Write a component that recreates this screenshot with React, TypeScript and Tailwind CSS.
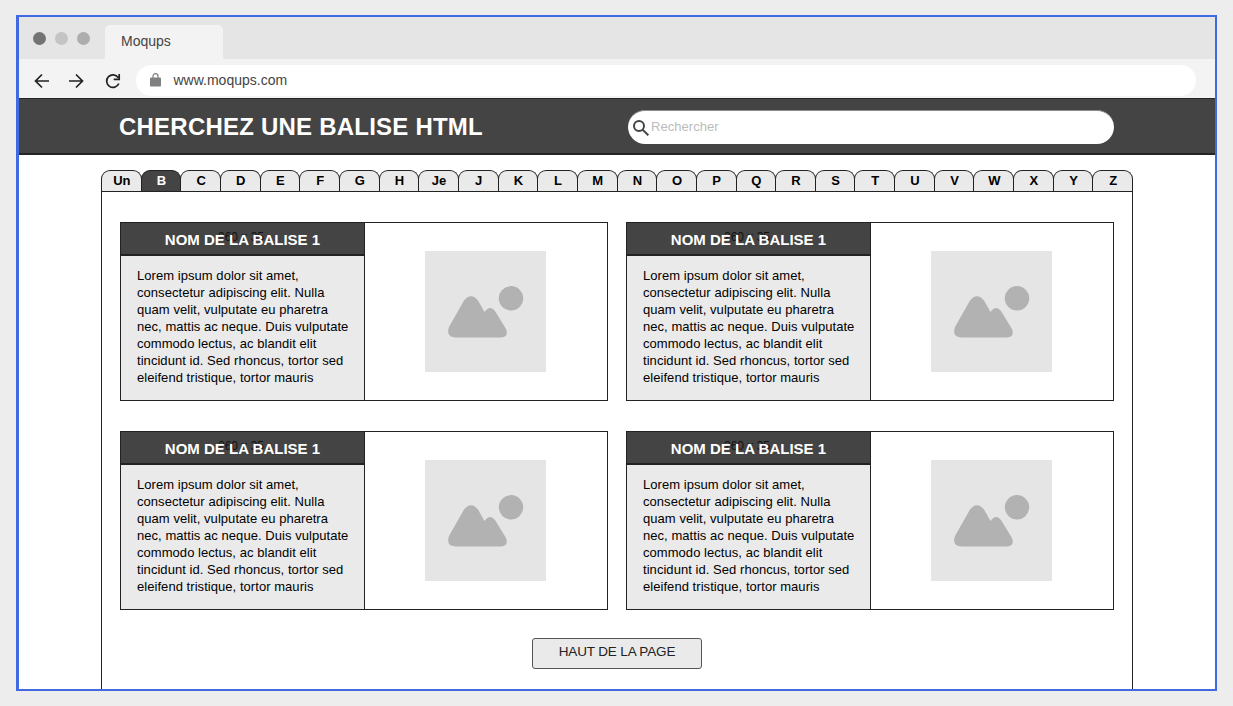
const letters = ['Un', 'B', 'C', 'D', 'E', 'F', 'G', 'H', 'Je', 'J', 'K', 'L', 'M', 'N', 'O', 'P', 'Q', 'R', 'S', 'T', 'U', 'V', 'W', 'X', 'Y', 'Z'];

const lines = [
  'Lorem ipsum dolor sit amet,',
  'consectetur adipiscing elit. Nulla',
  'quam velit, vulputate eu pharetra',
  'nec, mattis ac neque. Duis vulputate',
  'commodo lectus, ac blandit elit',
  'tincidunt id. Sed rhoncus, tortor sed',
  'eleifend tristique, tortor mauris',
];

function Picture() {
  return (
    <svg className="block h-[121px] w-[121px] bg-[#e5e5e5]" viewBox="0 0 121 121" fill="#b2b2b2">
      <circle cx="86" cy="47.300" r="12.200" />
      <path d="M39 49.500Q46 41 53 49.500L59.500 61Q65 53.500 70 60L81 78Q84 86.500 75 86.500H31Q20.500 86 24 76Z" />
    </svg>
  );
}

function Card() {
  return (
    <article className="flex h-[179px] w-[488px] border border-[#222] bg-white">
      <div className="flex w-[244px] flex-col border-r border-[#222] bg-[#eaeaea]">
        <h2 className="relative h-[33px] border-b-2 border-[#222] bg-[#444] text-center text-[15px] leading-[33px] font-bold text-white">
          <span className="absolute top-[-2px] right-0 left-[-3px] text-[12px] font-normal text-[#111]">260 x 35</span>
          <span className="relative whitespace-nowrap">NOM DE LA BALISE 1</span>
        </h2>
        <p className="pt-[11px] pl-4 text-[13px] leading-[17px] tracking-[0.05px] text-black">
          {lines.map((line) => (
            <span key={line} className="block whitespace-nowrap">{line}</span>
          ))}
        </p>
      </div>
      <div className="flex-1 pt-7 pl-[60px]">
        <Picture />
      </div>
    </article>
  );
}

function Browser() {
  return (
    <header>
      <div className="flex h-[42px] bg-[#e5e5e5] pl-[14px]">
        <div className="flex gap-[9px] pt-[15px]">
          <i className="size-[13px] rounded-full bg-[#737373]" />
          <i className="size-[13px] rounded-full bg-[#c4c4c4]" />
          <i className="size-[13px] rounded-full bg-[#adadad]" />
        </div>
        <div className="mt-2 ml-[15px] w-[118px] rounded-t-[5px] bg-[#f3f3f3] pl-4 text-[14px] leading-[32px] text-[#444]">Moqups</div>
      </div>
      <div className="flex h-[39px] items-start bg-[#f3f3f3] pt-[6px] pl-[15px]">
        <svg className="mt-[8px] h-4 w-[87px]" viewBox="0 0 87 16" fill="none" stroke="#222" strokeWidth="1.7">
          <path d="M15 8H1.500M8 1.500 1.500 8 8 14.500M35 8h13.500M42 1.500 48.500 8 42 14.500" />
          <path d="M84.200 4.600A6.300 6.300 0 1 0 84.800 10.500M85.200 1v5.300H79.700" />
        </svg>
        <div className="ml-[15px] flex h-[31px] w-[1060px] items-center rounded-full bg-white pl-[14px] text-[14px] text-[#444]">
          <svg className="-mt-px h-[14px] w-[11px]" viewBox="0 0 11 14">
            <path d="M3 6V3.200a2.500 2.500 0 0 1 5 0V6" fill="none" stroke="#808080" strokeWidth="1.200" />
            <rect y="4.500" width="11" height="9" rx="1" fill="#808080" />
          </svg>
          <span className="ml-[12.500px]">www.moqups.com</span>
        </div>
      </div>
    </header>
  );
}

export default function App() {
  return (
    <div className="h-[706px] w-[1233px] overflow-hidden bg-[#ededed] pt-[15px] pl-4 font-['Liberation_Sans',Arial,sans-serif]">
      <main className="flex h-[676px] w-[1201px] flex-col overflow-hidden border-2 border-l-3 border-[#4169e1] bg-white">
        <Browser />
        <section className="flex h-[57px] shrink-0 border-t border-b-2 border-[#252525] bg-[#444] pl-[100px]">
          <h1 className="w-[509px] text-[24px] leading-[56px] font-bold tracking-[0.22px] whitespace-nowrap text-white">CHERCHEZ UNE BALISE HTML</h1>
          <label className="mt-[11px] flex h-[34px] w-[486px] items-center rounded-full border-t border-[#8c8c8c] bg-white pl-[5px]">
            <svg className="mt-px size-[16px] shrink-0" viewBox="0 0 16 16" fill="none" stroke="#444" strokeWidth="2">
              <circle cx="6" cy="6" r="5" />
              <path d="m9.600 9.600 5.700 5.700" />
            </svg>
            <input className="mb-px ml-[2px] min-w-0 flex-1 bg-transparent text-[13px] tracking-[0.05px] outline-none placeholder:text-[#bcbcbc]" placeholder="Rechercher" />
          </label>
        </section>
        <nav className="mt-[15px] ml-[82px] flex h-[21px] w-[1032px] shrink-0 pl-px">
          {letters.map((letter) => (
            <button
              key={letter}
              className={letter === 'B'
                ? '-ml-px min-w-0 flex-1 rounded-t-[9px] border border-b-0 border-[#222] bg-[#444] pl-px text-[13px] leading-[18px] font-bold text-white'
                : '-ml-px min-w-0 flex-1 rounded-t-[9px] border border-b-0 border-[#222] bg-[#eaeaea] pl-px text-[13px] leading-[18px] font-bold text-black'}
            >
              {letter}
            </button>
          ))}
        </nav>
        <section className="ml-[82px] w-[1032px] flex-1 border border-b-0 border-[#222] pt-[30px] pl-[18px]">
          <div className="grid w-[994px] grid-cols-[488px_488px] gap-x-[18px] gap-y-[30px]">
            <Card /><Card /><Card /><Card />
          </div>
          <button className="mt-[28px] ml-[412px] h-[31px] w-[170px] rounded-[3px] border border-[#555] bg-[#eaeaea] pb-[2px] text-[13.500px] tracking-[-0.150px] text-[#222]">HAUT DE LA PAGE</button>
        </section>
      </main>
    </div>
  );
}
